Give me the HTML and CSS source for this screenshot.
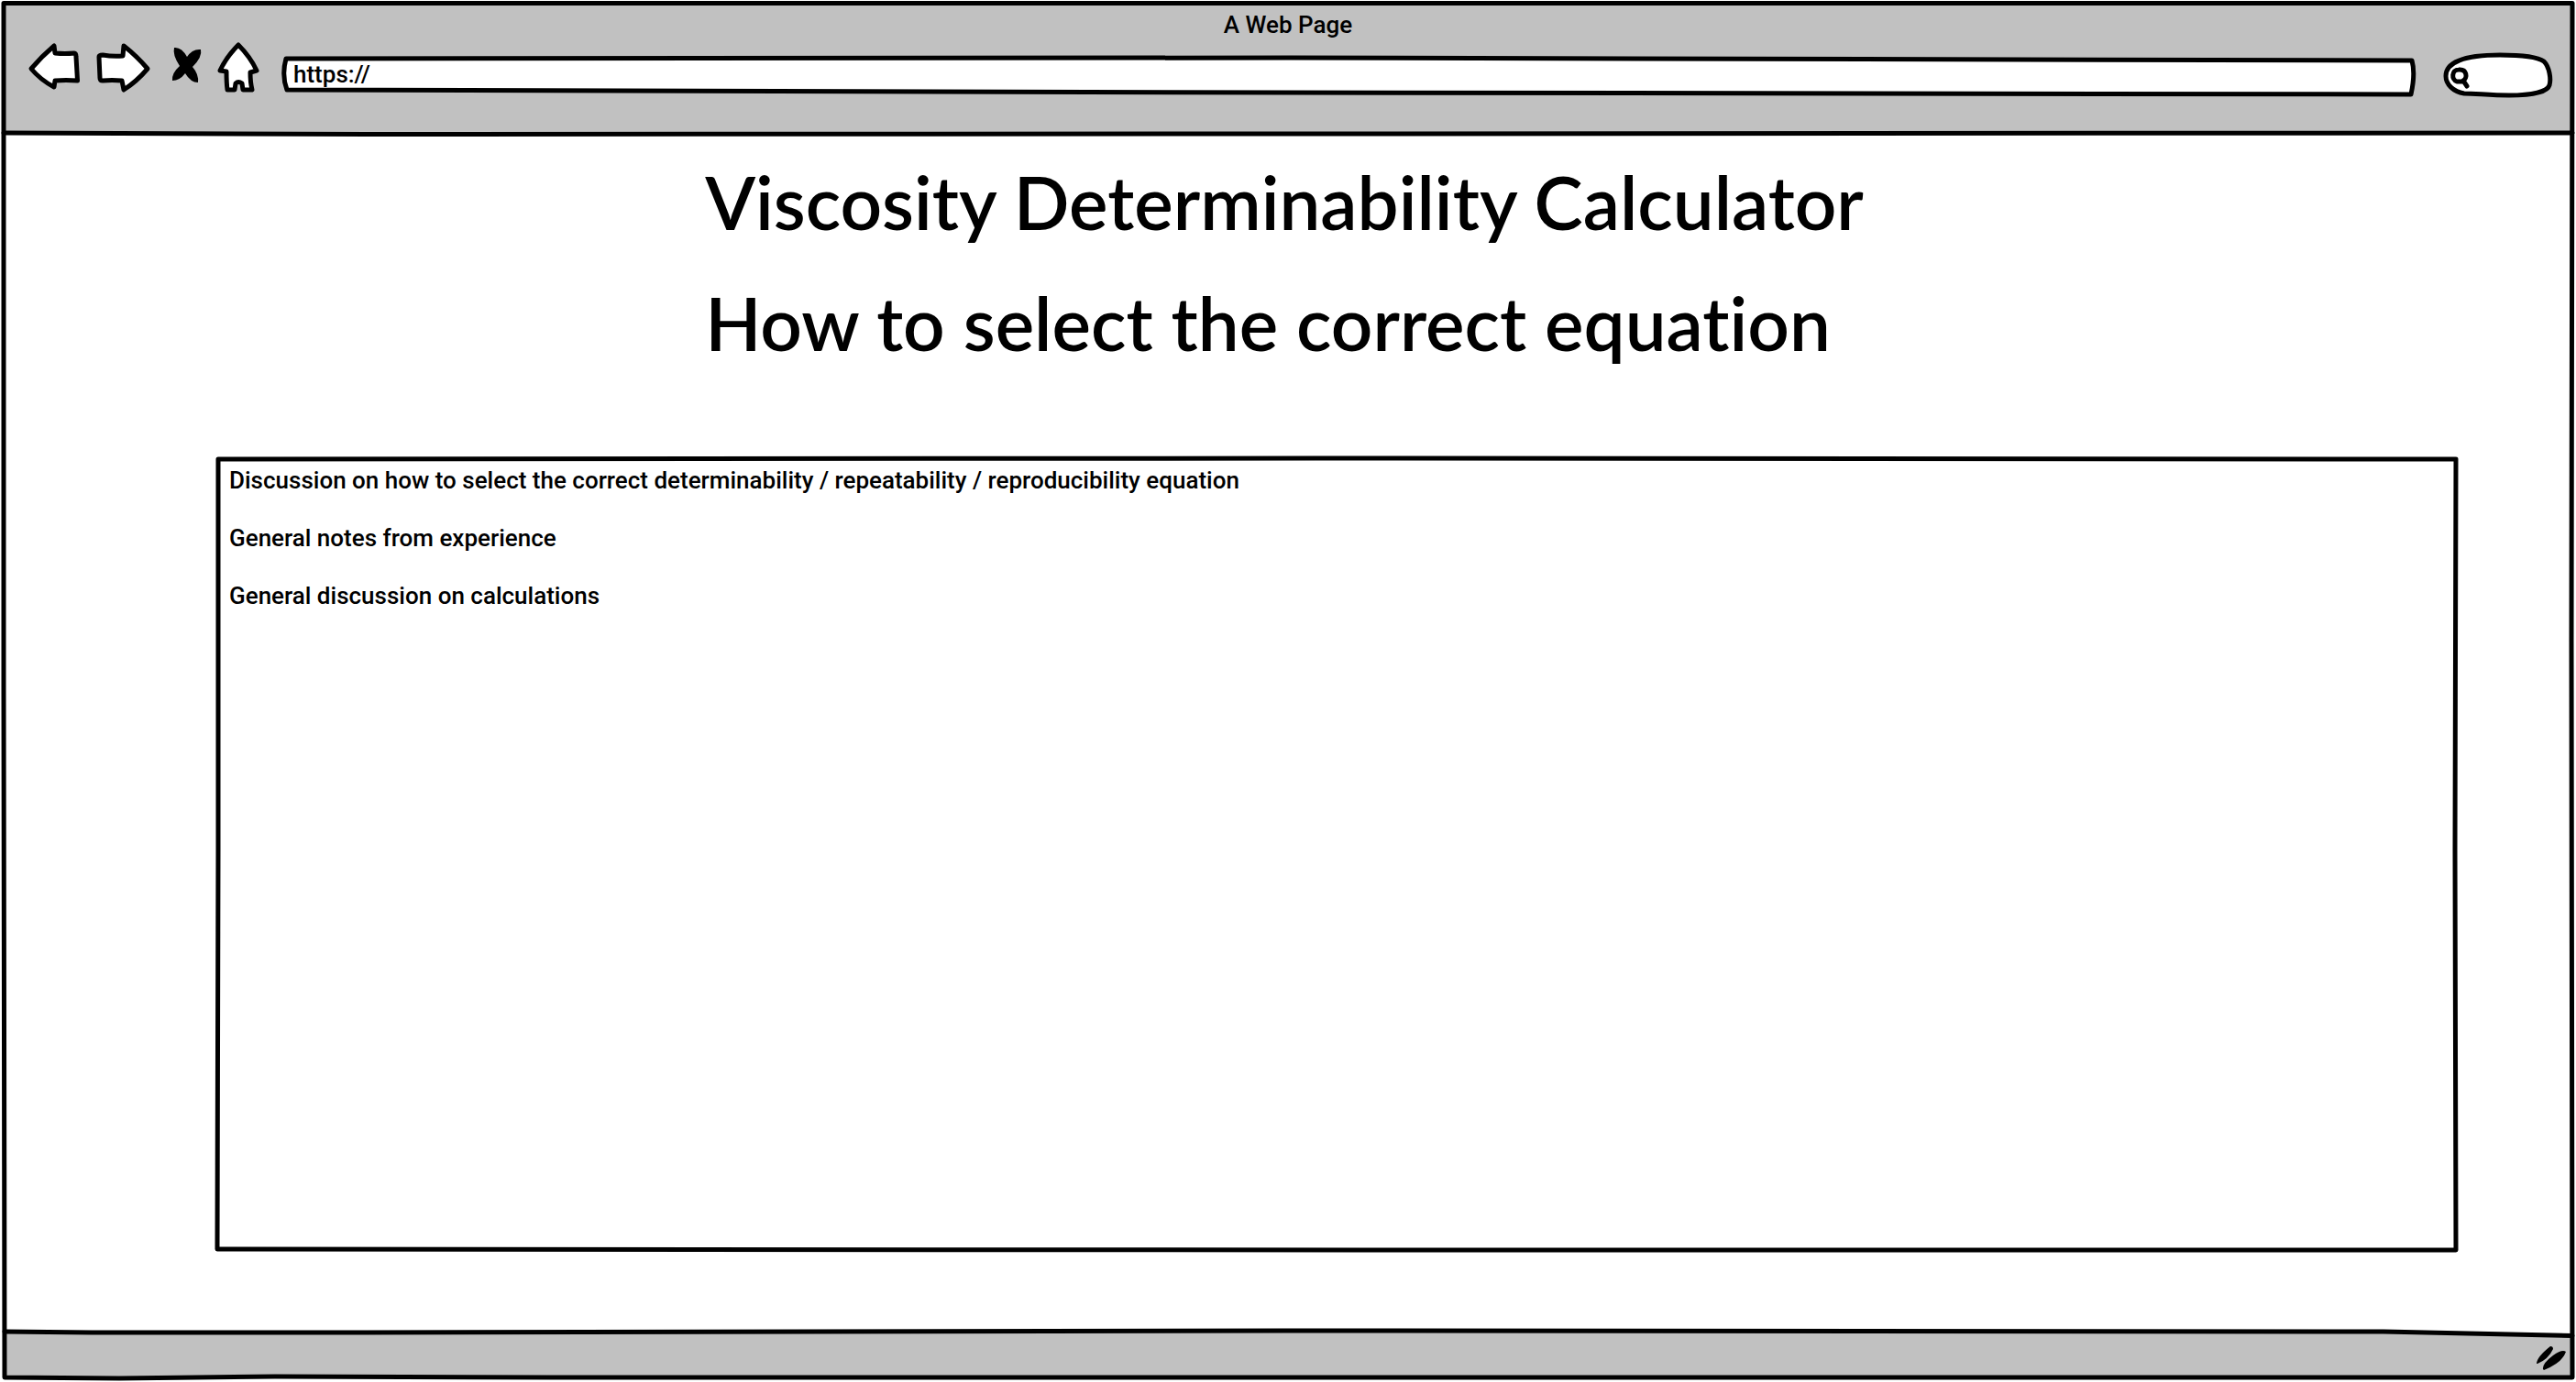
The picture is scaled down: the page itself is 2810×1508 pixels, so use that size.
FILE: index.html
```html
<!DOCTYPE html>
<html lang="en">
<head>
<meta charset="utf-8">
<title>A Web Page</title>
<link rel="stylesheet" href="styles.css">
</head>
<body>
<div class="window">
  <header class="chrome">
    <svg class="sketch" viewBox="0 0 2810 148" preserveAspectRatio="none" aria-hidden="true">
      <path class="fill-grey" d="M4 3H2806V145L1400 146L200 146L4 145Z"/>
      <path class="line" d="M4 145Q200 146.500 400 146.500L1400 146L2806 145"/>
    </svg>
    <p class="title">A Web Page</p>
    <div class="toolbar">
      <nav class="nav" aria-label="Browser">
        <button class="tool" type="button" aria-label="Back">
          <svg width="60" height="58" viewBox="30 46 60 58"><path class="icon" d="M34 75Q46 61 59 50L60 58Q71 59 81 58Q83 58 83 62L84.500 88Q72 87 60 88L59 95Q44 87 34 75Z"/></svg>
        </button>
        <button class="tool" type="button" aria-label="Forward">
          <svg width="64" height="58" viewBox="102 46 64 58"><path class="icon" d="M108 62Q108 60 112 60Q123 62 134 61L135 50Q149 61 161 75Q149 89 135 98L133 88Q122 87 112 88Q109 88 109 85Z"/></svg>
        </button>
        <button class="tool" type="button" aria-label="Stop">
          <svg width="46" height="58" viewBox="178 46 46 58"><path d="M190 52Q198 51 204 62Q210 53 219 54Q221 62 210 73Q217 81 216 90Q208 90 202 80Q196 88 188 88Q187 80 196 72Q188 60 190 52Z"/></svg>
        </button>
        <button class="tool" type="button" aria-label="Home">
          <svg width="48" height="58" viewBox="236 46 48 58"><path class="icon" d="M240 77Q247 62 260 49Q273 62 280 77L273 79Q273 90 275 98H265L264 91Q260 88 257 91L256 98L248 98Q247 90 247 78Z"/></svg>
        </button>
      </nav>
      <div class="address">
        <svg class="sketch" viewBox="0 0 2330 46" preserveAspectRatio="none" aria-hidden="true">
          <path class="line fill-white" d="M4 4Q-1 22 5 38L1090 41L2322 43Q2327 20 2323 6L1100 3Z"/>
        </svg>
        <input class="address-input" type="text" aria-label="Address" value="https://">
      </div>
      <div class="search">
        <svg class="sketch" viewBox="2662 56 124 50" aria-hidden="true">
          <path class="icon" d="M2668 83C2668 68 2688 60 2727 60C2748 60 2768 62 2775 67C2781 73 2783 86 2781 93C2779 100 2762 104 2737 104C2716 104 2701 102 2688 102C2676 100 2668 92 2668 83Z"/>
          <path class="line" d="M2687 89H2680C2674 87 2674 76 2682 76C2691 75 2692 85 2687 88L2691 94"/>
        </svg>
        <input class="search-input" type="text" aria-label="Search">
      </div>
    </div>
  </header>

  <main class="page">
    <div class="headings">
      <h1 class="heading">Viscosity Determinability Calculator</h1>
      <h2 class="heading">How to select the correct equation</h2>
    </div>
    <section class="notes">
      <svg class="sketch" viewBox="0 0 2446 870" preserveAspectRatio="none" aria-hidden="true">
        <path class="line" d="M3 3L1200 2L2444 3L2443 430L2444 868L1250 868L2 867L3 430Z"/>
      </svg>
      <p>Discussion on how to select the correct determinability / repeatability / reproducibility equation</p>
      <p>General notes from experience</p>
      <p>General discussion on calculations</p>
    </section>
  </main>

  <footer class="status">
    <svg class="sketch" viewBox="0 0 2810 58" preserveAspectRatio="none" aria-hidden="true">
      <path class="fill-grey" d="M5 3L250 4L1400 2L2600 3L2806 7V53H600L130 54L5 53Z"/>
      <path class="line" d="M5 3L100 4L400 4L1400 2L2600 3L2806 7.500"/>
    </svg>
    <svg class="grip" width="34" height="28" viewBox="2766 1469 34 28" aria-hidden="true">
      <path d="M2767 1489Q2767 1482 2782 1470Q2785 1470 2785 1473Q2780 1484 2768 1489ZM2774 1495Q2773 1489 2785 1480Q2795 1473 2799 1476Q2795 1488 2775 1496Z"/>
    </svg>
  </footer>

  <svg class="sketch frame" viewBox="0 0 2810 1508" preserveAspectRatio="none" aria-hidden="true">
    <path class="line" d="M4 3.500H2806L2805 700L2806 1503H600L300 1502L130 1504L5 1503L4 750Z"/>
  </svg>
</div>
</body>
</html>
```
FILE: styles.css
```css
* { box-sizing: border-box; }

body {
  margin: 0;
  background: #fff;
  color: #000;
  font: 500 26px/31px Roboto, "Liberation Sans", sans-serif;
}

p, h1, h2 { margin: 0; }

.window {
  position: relative;
  display: flex;
  flex-direction: column;
  min-height: 100vh;
}

/* Hand-drawn outlines stretched behind their container */
.sketch {
  position: absolute;
  inset: 0;
  width: 100%;
  height: 100%;
  overflow: visible;
  pointer-events: none;
}

.line {
  fill: none;
  stroke: #000;
  stroke-width: 5px;
  stroke-linejoin: round;
  stroke-linecap: round;
  vector-effect: non-scaling-stroke;
}

.fill-grey { fill: #c1c1c1; }
.fill-white { fill: #fff; }

.icon {
  fill: #fff;
  stroke: #000;
  stroke-width: 5px;
  stroke-linejoin: round;
}

.chrome {
  position: relative;
  display: flex;
  flex-direction: column;
  gap: 3px;
  padding: 12px 24px 42px 30px;
}

.title {
  position: relative;
  padding-right: 6px;
  text-align: center;
}

.toolbar {
  position: relative;
  display: flex;
  align-items: flex-end;
  gap: 24px;
  height: 60px;
}

.nav {
  display: flex;
  align-self: flex-start;
  gap: 12px;
}

.tool {
  display: block;
  padding: 0;
  border: 0;
  background: none;
}

.tool svg {
  display: block;
  overflow: visible;
}

.address {
  position: relative;
  flex: 1;
  height: 46px;
}

.address-input,
.search-input {
  position: relative;
  display: block;
  width: 100%;
  height: 100%;
  border: 0;
  outline: 0;
  background: none;
  color: inherit;
  font: inherit;
}

.address-input { padding: 0 12px 4px; }

.search {
  position: relative;
  width: 124px;
  height: 50px;
}

.search-input { padding: 0 12px 0 36px; }

.page {
  flex: 1;
  display: flex;
  flex-direction: column;
  gap: 80px;
  padding: 6px 129px 84px 235px;
}

.headings {
  align-self: center;
  margin-right: 114px;
}

.heading {
  font: 600 80px/132px Lato, "Liberation Sans", sans-serif;
  font-variant-ligatures: none;
}

.notes {
  position: relative;
  flex: 1;
  display: flex;
  flex-direction: column;
  gap: 32px;
  padding: 11px 15px;
}

.status {
  position: relative;
  display: flex;
  justify-content: flex-end;
  height: 58px;
  padding: 18px 10px 12px;
}

.grip { position: relative; }
```
